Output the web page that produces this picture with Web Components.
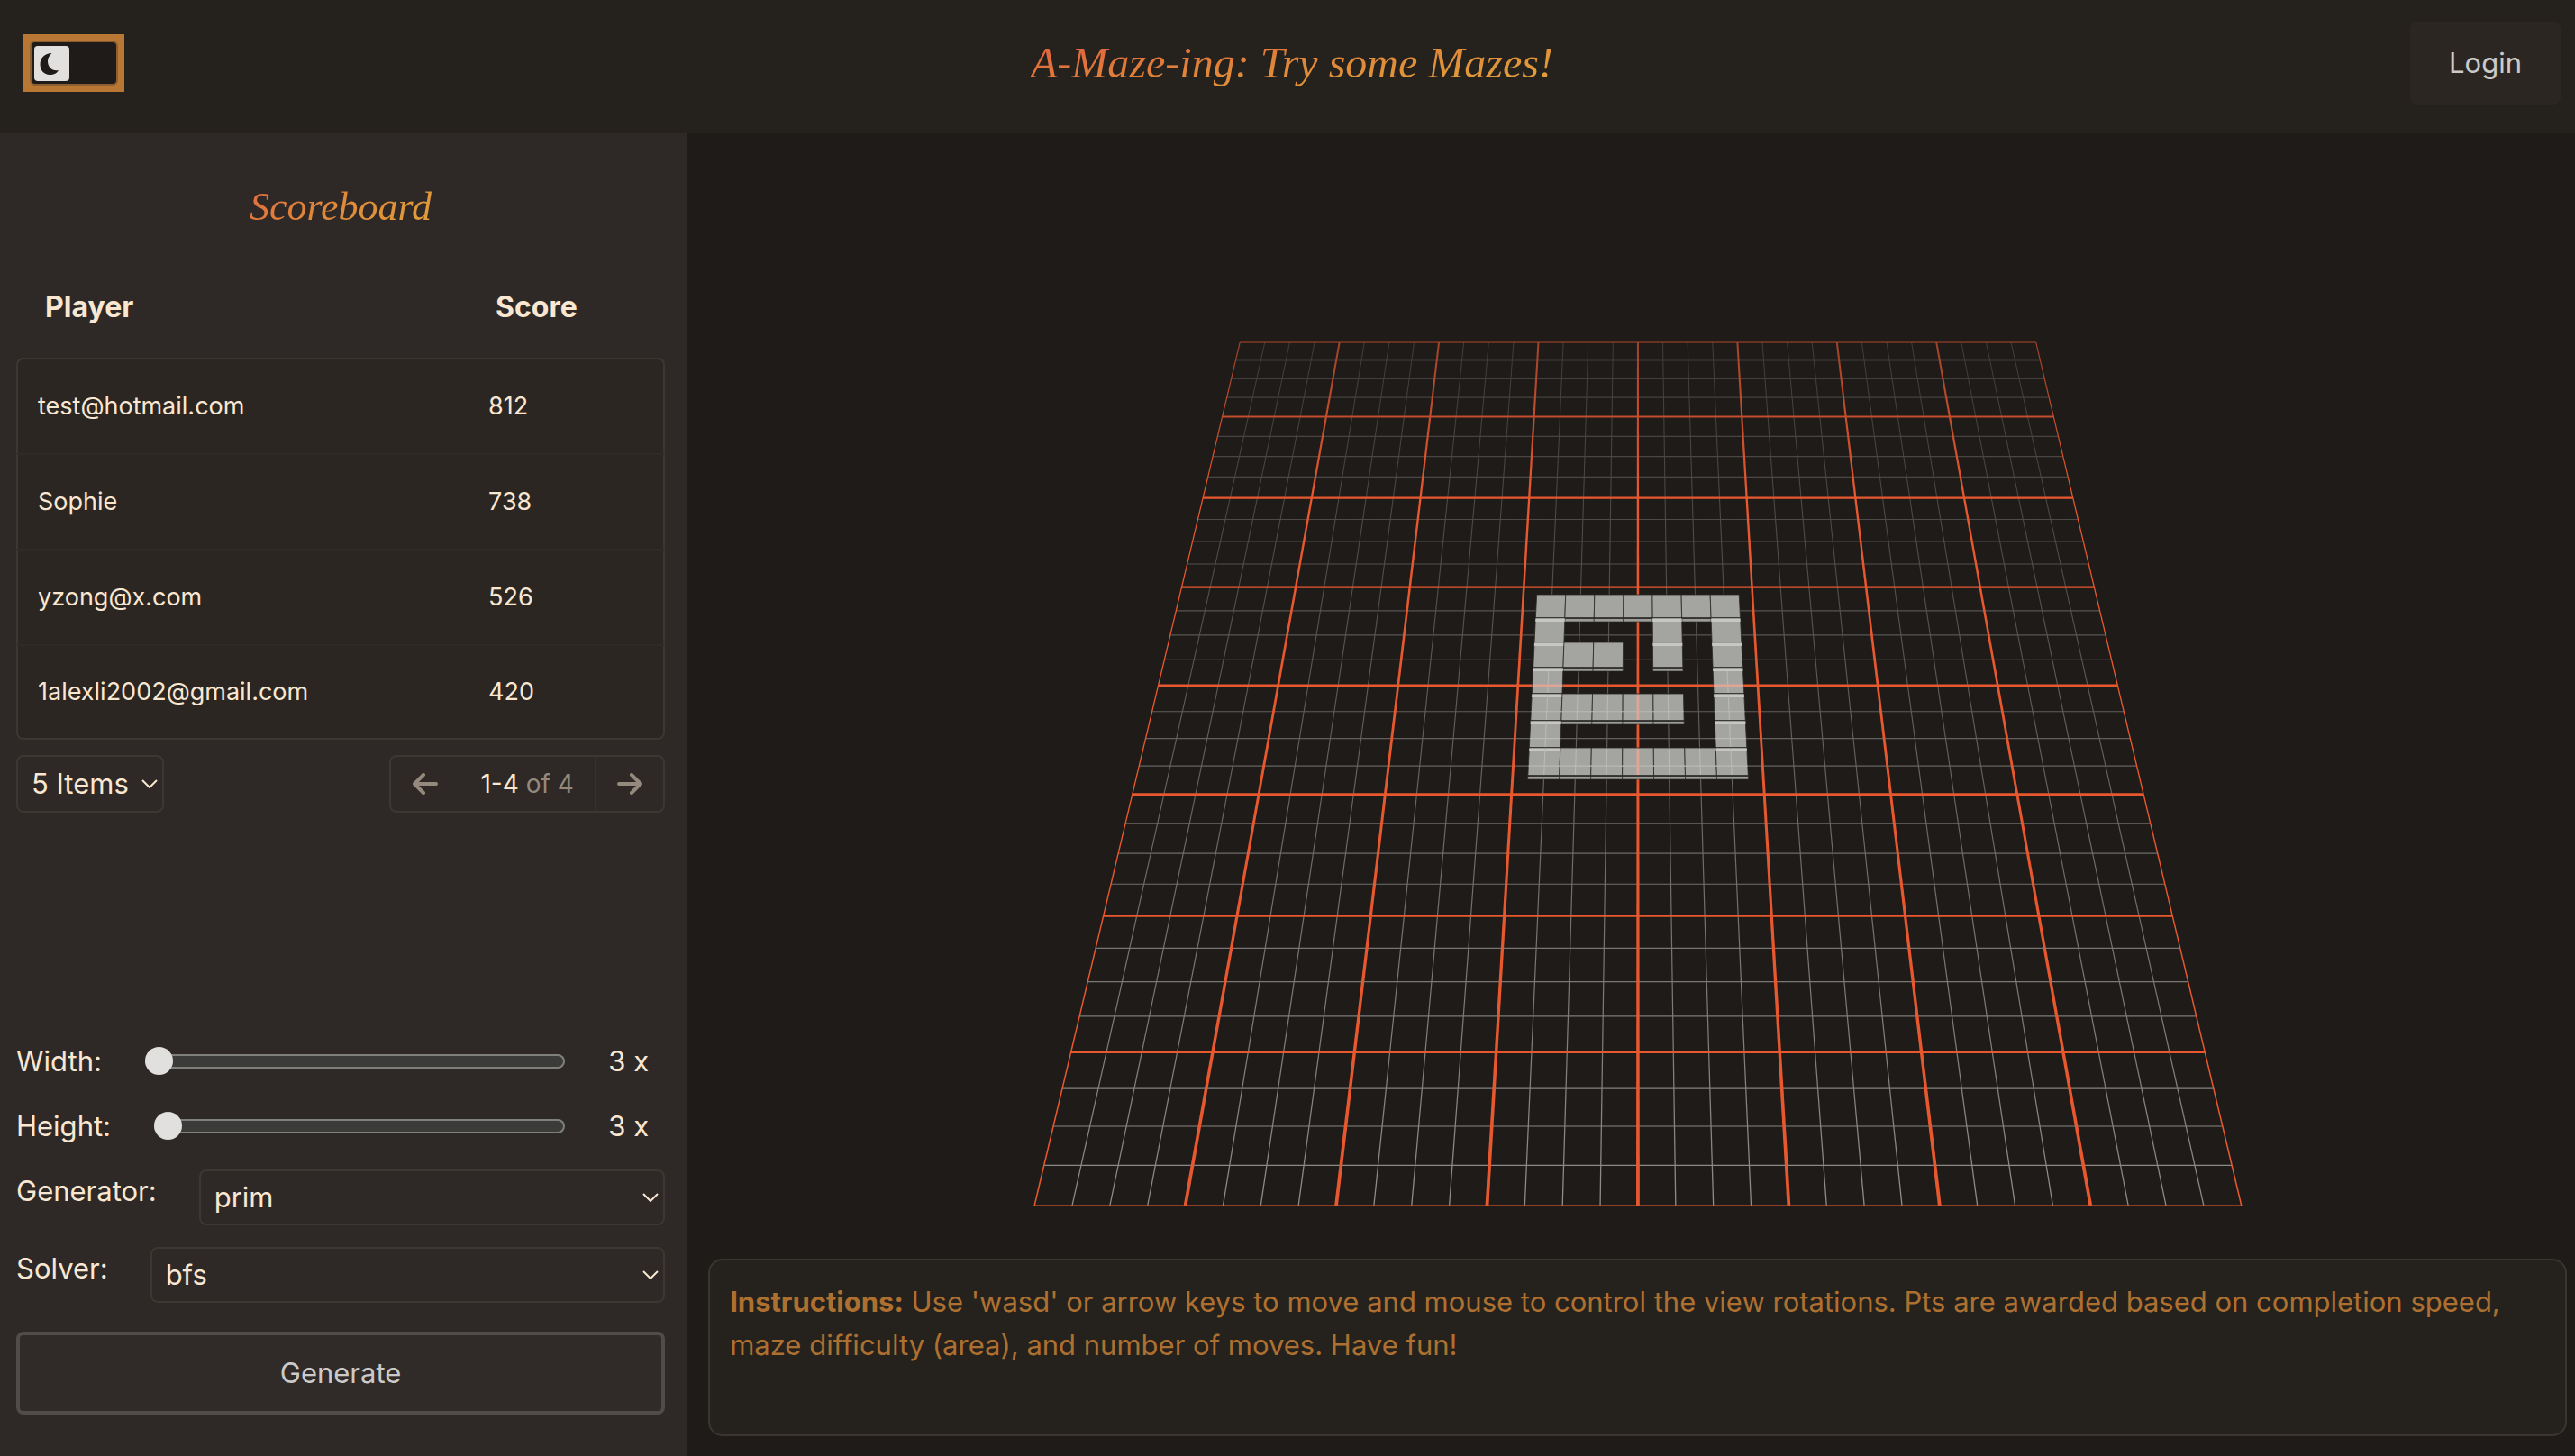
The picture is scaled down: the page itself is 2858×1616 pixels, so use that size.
<!DOCTYPE html>
<html lang="en">
<head>
<meta charset="utf-8">
<meta name="viewport" content="width=device-width, initial-scale=1">
<title>A-Maze-ing</title>
<style>
  :root {
    --bar: #25221e;
    --page: #1f1b18;
    --side: #2e2927;
    --card: #2b2622;
    --line: #3d3733;
    --cream: #f9e7d2;
    --muted: #94897c;
    --soft: #cccac8;
    --amber: #b87833;
    --script: "Apple Chancery", "Z003", "URW Chancery L", "Liberation Serif", serif;
    --title: linear-gradient(to bottom right, #e2553f, #e0873a 50%, #e0a83a);
  }
  html, body { margin: 0; background: var(--page); }
  body { font: 31px/48px Inter, "Liberation Sans", sans-serif; color: var(--cream); }
</style>
</head>
<body>
<maze-app></maze-app>
<script>
const define = (name, html, setup) => {
  const template = document.createElement('template');
  template.innerHTML = html;
  customElements.define(name, class extends HTMLElement {
    constructor() {
      super();
      this.attachShadow({ mode: 'open' }).append(template.content.cloneNode(true));
    }
    connectedCallback() { if (setup) setup(this, this.shadowRoot); }
  });
};

define('theme-toggle', `
  <style>
    :host { display: block; }
    label { display: inline-grid; background: var(--amber); padding: 7px; align-items: center; justify-items: start; vertical-align: top; }
    input, svg { grid-area: 1 / 1; }
    input { appearance: none; margin: 0; width: 98px; height: 50px; border: 2px solid #8c5f33; border-radius: 6px; background: var(--page); }
    svg { width: 39px; height: 39px; margin-left: 5px; background: #e1e0de; border-radius: 4px; pointer-events: none; }
  </style>
  <label>
    <input type="checkbox" role="switch" aria-label="Light theme">
    <svg viewBox="0 0 39 39" aria-hidden="true"><path d="M19.500 8C12 8 6.500 13 6.500 20.500C6.500 27 11 32 17 32C22 32 25.500 30 27 27C20 28.500 15 23.500 15 17C15 13 17 10.500 19.500 8Z" fill="#1f1b18"/></svg>
  </label>`);

define('maze-header', `
  <style>
    :host { display: grid; grid-template-columns: 1fr auto 1fr; align-items: center; height: 148px; padding: 0 16px 8px 26px; box-sizing: border-box; background: var(--bar); }
    h1 { margin: 0; font: italic 400 48px/72px var(--script); background: var(--title); -webkit-background-clip: text; background-clip: text; color: transparent; }
    button { justify-self: end; border: 0; border-radius: 8px; background: var(--card); color: var(--soft); font: inherit; height: 92px; padding: 0 43px; }
  </style>
  <theme-toggle></theme-toggle>
  <h1><slot></slot></h1>
  <button type="button">Login</button>`);

define('select-field', `
  <style>
    :host { display: flex; align-items: flex-start; gap: 47px; }
    label:empty { display: none; }
    .box { flex: 1; display: grid; align-items: center; }
    select, svg { grid-area: 1 / 1; }
    select { appearance: none; width: 100%; height: 62px; border: 2px solid var(--line); border-radius: 8px; background: transparent; color: inherit; font: inherit; padding: 0 15px; }
    :host([compact]) select { width: 164px; height: 64px; }
    svg { justify-self: end; width: 18px; height: 10px; margin-right: 7px; pointer-events: none; }
  </style>
  <label for="s"></label>
  <div class="box">
    <select id="s"></select>
    <svg viewBox="0 0 18 10" fill="none" stroke="currentColor" stroke-width="2"><path d="M1 1L9 9L17 1"/></svg>
  </div>`, (host, root) => {
  root.querySelector('label').textContent = host.getAttribute('label') || '';
  const select = root.querySelector('select');
  if (!host.hasAttribute('label')) select.setAttribute('aria-label', 'Items per page');
  select.replaceChildren(...host.getAttribute('options').split(',').map(o => new Option(o, o)));
});

define('range-field', `
  <style>
    :host { display: flex; align-items: center; }
    input { appearance: none; flex: 1; min-width: 0; height: 32px; margin: 0 48px; background: none; }
    input::-webkit-slider-runnable-track { height: 16px; border-radius: 8px; background: #3b3b3a; box-shadow: inset 0 0 0 2px #7f7f7e; }
    input::-webkit-slider-thumb { appearance: none; width: 31px; height: 31px; margin-top: -8px; border-radius: 50%; background: #e1e0de; }
    output { margin-right: 18px; }
  </style>
  <label for="r"></label>
  <input id="r" type="range" min="3" max="30" value="3">
  <output for="r">3 x</output>`, (host, root) => {
  const input = root.querySelector('input');
  root.querySelector('label').textContent = host.getAttribute('label');
  input.oninput = () => root.querySelector('output').value = input.value + ' x';
});

define('score-board', `
  <style>
    :host { display: block; }
    h2 { width: max-content; margin: 0 auto; padding: 46px 0 18px; font: italic 400 44px/72px var(--script); background: var(--title); -webkit-background-clip: text; background-clip: text; color: transparent; }
    table { width: 100%; table-layout: fixed; border-collapse: separate; border-spacing: 0; text-align: left; }
    th { height: 113px; padding: 0 0 0 28px; box-sizing: border-box; font-size: 32px; font-weight: 700; }
    th:first-child { width: 70%; padding-left: 32px; }
    td { height: 106px; box-sizing: border-box; padding: 0 0 0 20px; font-size: 27px; background: var(--card); border: 0 solid var(--line); border-top: 2px solid #2f2a27; }
    tr:first-child td { border-top-color: var(--line); }
    tr:last-child td { border-bottom-width: 2px; }
    td:first-child { border-left-width: 2px; padding-left: 22px; }
    td:last-child { border-right-width: 2px; }
    tr:first-child td:first-child { border-top-left-radius: 8px; }
    tr:first-child td:last-child { border-top-right-radius: 8px; }
    tr:last-child td:first-child { border-bottom-left-radius: 8px; }
    tr:last-child td:last-child { border-bottom-right-radius: 8px; }
    footer { display: flex; justify-content: space-between; margin-top: 17px; }
    nav { display: flex; align-items: center; width: 306px; height: 64px; box-sizing: border-box; border: 2px solid var(--line); border-radius: 8px; font-size: 28px; }
    nav button { width: 76px; height: 60px; padding: 0; border: 0; background: none; color: var(--muted); }
    nav button:first-child { border-right: 1px solid #37312d; }
    nav button:last-child { border-left: 1px solid #37312d; }
    nav svg { display: block; margin: auto; width: 28px; height: 24px; }
    nav span { flex: 1; text-align: center; white-space: nowrap; }
    i { font-style: normal; color: var(--muted); }
  </style>
  <h2>Scoreboard</h2>
  <table>
    <thead><tr><th>Player</th><th>Score</th></tr></thead>
    <tbody>
      <tr><td>test@hotmail.com</td><td>812</td></tr>
      <tr><td>Sophie</td><td>738</td></tr>
      <tr><td>yzong@x.com</td><td>526</td></tr>
      <tr><td>1alexli2002@gmail.com</td><td>420</td></tr>
    </tbody>
  </table>
  <footer>
    <select-field compact options="5 Items,10 Items"></select-field>
    <nav aria-label="Pages">
      <button type="button" aria-label="Previous"><svg viewBox="0 0 28 24" fill="none" stroke="currentColor" stroke-width="4" stroke-linecap="round" stroke-linejoin="round"><path d="M26 12H3M12 2L2 12L12 22"/></svg></button>
      <span>1-4 <i>of 4</i></span>
      <button type="button" aria-label="Next"><svg viewBox="0 0 28 24" fill="none" stroke="currentColor" stroke-width="4" stroke-linecap="round" stroke-linejoin="round"><path d="M2 12H25M16 2L26 12L16 22"/></svg></button>
    </nav>
  </footer>`);

define('maze-controls', `
  <style>
    form { display: flex; flex-direction: column; gap: 24px; }
    :host { display: block; }
    button { margin-top: 8px; height: 92px; border: 4px solid #504c49; border-radius: 8px; background: #302b28; color: var(--soft); font: inherit; }
  </style>
  <form>
    <range-field label="Width:"></range-field>
    <range-field label="Height:"></range-field>
    <select-field label="Generator:" options="prim,kruskal"></select-field>
    <select-field label="Solver:" options="bfs,dfs"></select-field>
    <button type="button">Generate</button>
  </form>`);

define('maze-scene', `
  <style>
    :host { display: block; }
    svg { display: block; width: 100%; height: 100%; }
  </style>
  <svg viewBox="0 0 2096 1249" role="img" aria-label="Maze on a grid">
    <defs>
      <linearGradient id="minor" gradientUnits="userSpaceOnUse" x1="0" y1="232" x2="0" y2="1190">
        <stop offset="0" stop-color="#3f3c3a"/><stop offset=".3" stop-color="#545250"/><stop offset=".6" stop-color="#6e6d6b"/><stop offset="1" stop-color="#8e8d8a"/>
      </linearGradient>
      <linearGradient id="major" gradientUnits="userSpaceOnUse" x1="0" y1="232" x2="0" y2="404">
        <stop offset="0" stop-color="#a0432a"/><stop offset="1" stop-color="#e8582f"/>
      </linearGradient>
      <clipPath id="near"><rect x="900" y="597" width="300" height="120"/></clipPath>
      <clipPath id="walls"></clipPath>
    </defs>
    <g id="grid"></g>
    <g id="maze"></g>
    <g clip-path="url(#near)"><g id="glow" clip-path="url(#walls)"></g></g>
  </svg>`, (host, root) => {
  const CX = 1056, TOP = 232, BOTTOM = 1190, W0 = 441.75, W1 = 669.85, N = 32;
  // Half-width of the floor at depth t, seen in perspective: 1/w is linear in depth.
  const half = t => 1 / ((1 - t / N) / W0 + (t / N) / W1);
  const yAt = t => TOP + (half(t) - W0) * (BOTTOM - TOP) / (W1 - W0);
  const poly = (pts, fill, extra = '') => `<polygon points="${pts.map(p => p.map(v => v.toFixed(2)).join()).join(' ')}" fill="${fill}" ${extra}/>`;
  const floor = (minor, major) => {
    let thin = '', thick = '';
    for (let i = 0; i <= N; i++) {
      const y = yAt(i), w = half(i), k = i / (N / 2) - 1;
      const xt = CX + k * W0, xb = CX + k * W1;
      const edge = i === 0 || i === N;
      if (i % 4) {
        thin += poly([[CX - w, y - .6], [CX + w, y - .6], [CX + w, y + .6], [CX - w, y + .6]], minor);
        thin += poly([[xt - .5, TOP], [xt + .5, TOP], [xb + .65, BOTTOM], [xb - .65, BOTTOM]], minor);
      } else {
        const h = edge ? .8 : 1 + .6 * i / N;
        const a = edge ? .6 : 1, b = edge ? .8 : 1.9;
        const dim = edge ? 'opacity=".75"' : '';
        thick += poly([[CX - w, y - h], [CX + w, y - h], [CX + w, y + h], [CX - w, y + h]], major, dim);
        thick += poly([[xt - a, TOP], [xt + a, TOP], [xb + b, BOTTOM], [xb - b, BOTTOM]], major);
      }
    }
    return thin + thick;
  };
  root.getElementById('grid').innerHTML = floor('url(#minor)', 'url(#major)');
  root.getElementById('glow').innerHTML = floor('#b9b9b6', '#e0a594');

  const rows = ['1111111', '1000101', '1110101', '1000001', '1111101', '1000001', '1111111'];
  const ys = [512, 538, 565, 593, 622, 652, 682, 713];
  const xAt = (c, y) => {
    const k = (y - 512) / 205;
    const l = 943.7 - 10 * k, r = 1168.3 + 10.3 * k;
    return l + (r - l) * c / 7;
  };
  const quad = (c, y1, y2) => [[xAt(c, y1), y1], [xAt(c + 1, y1), y1], [xAt(c + 1, y2), y2], [xAt(c, y2), y2]];
  let walls = '', clip = '';
  rows.forEach((row, r) => [...row].forEach((cell, c) => {
    if (cell !== '1') return;
    const q = quad(c, ys[r], ys[r + 1]);
    clip += poly(quad(c, ys[r] + 1, ys[r + 1] - 1), '#000');
    walls += poly(q, '#a4a4a1', 'stroke="#2a2826" stroke-width=".8"');
    if (r && rows[r - 1][c] === '1') walls += poly(quad(c, ys[r] + .6, ys[r] + 4), '#c6c6c4');
    if (r === 6 || rows[r + 1][c] !== '1') walls += poly(quad(c, ys[r + 1], ys[r + 1] + 4), '#9c9d99', 'stroke="#2a2826" stroke-width=".6"');
    walls += poly(quad(c, ys[r + 1] - .5, ys[r + 1] + .7), '#1f1d1b');
  }));
  root.getElementById('maze').innerHTML = walls;
  root.getElementById('walls').innerHTML = clip;
});

define('instruction-panel', `
  <style>
    :host { display: block; box-sizing: border-box; min-height: 197px; padding: 22px; border: 2px solid #3a3531; border-radius: 16px; background: #25221d; color: #ad7031; }
    p { margin: 0; }
  </style>
  <p><slot></slot></p>`);

define('maze-app', `
  <style>
    :host { display: grid; grid-template-rows: auto 1fr; min-height: 100vh; }
    .body { display: grid; grid-template-columns: 4fr 11fr; }
    aside { display: flex; flex-direction: column; justify-content: space-between; background: var(--side); padding: 0 24px 46px 18px; }
    main { display: flex; flex-direction: column; min-width: 0; }
    maze-scene { flex: 1; min-height: 0; }
    instruction-panel { margin: 0 9px 22px 24px; }
  </style>
  <maze-header>A-Maze-ing: Try some Mazes!</maze-header>
  <div class="body">
    <aside>
      <score-board></score-board>
      <maze-controls></maze-controls>
    </aside>
    <main>
      <maze-scene></maze-scene>
      <instruction-panel><b>Instructions:</b> Use 'wasd' or arrow keys to move and mouse to control the view rotations. Pts are awarded based on completion speed, maze difficulty (area), and number of moves. Have fun!</instruction-panel>
    </main>
  </div>`);
</script>
</body>
</html>
